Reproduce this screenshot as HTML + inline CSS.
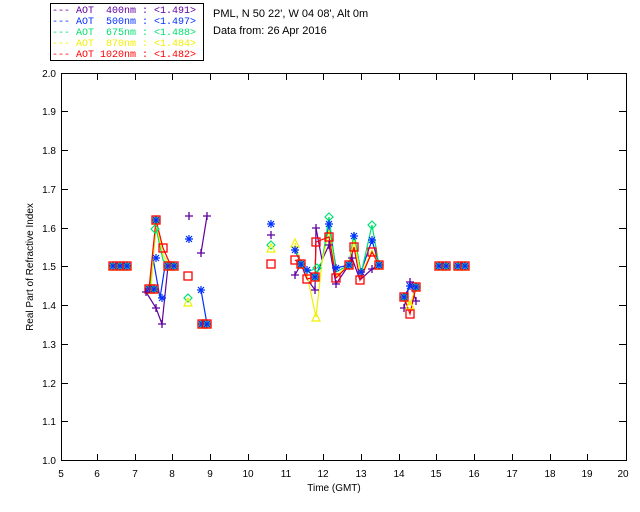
<!DOCTYPE html>
<html><head><meta charset="utf-8"><style>
html,body{margin:0;padding:0;background:#fff;width:640px;height:512px;overflow:hidden}
svg{display:block}
text{font-family:"Liberation Sans",sans-serif;font-size:10px}
.lg{font-family:"Liberation Mono",monospace;font-size:10px}
.hd{font-size:11px}
</style></head><body>
<svg width="640" height="512" viewBox="0 0 640 512" xmlns="http://www.w3.org/2000/svg">
<defs>
<g id="sq"><rect x="-4" y="-4" width="8" height="8" fill="none" stroke="#f00" stroke-width="1.3"/></g>
<g id="pl"><path d="M-4 0H4M0 -4V4" stroke="#6000a0" stroke-width="1.3"/></g>
<g id="as"><path d="M-4 0H4M0 -4V4M-3 -3L3 3M-3 3L3 -3" stroke="#0030ff" stroke-width="1.2"/></g>
<g id="di"><path d="M0 -4L4 0L0 4L-4 0Z" fill="none" stroke="#00e070" stroke-width="1.2"/></g>
<g id="tr"><path d="M0 -4L4 4H-4Z" fill="none" stroke="#f0f000" stroke-width="1.2"/></g>
<g id="al"><use href="#tr"/><use href="#di"/><use href="#as"/><use href="#sq"/></g>
</defs>
<rect x="50.5" y="3.5" width="153" height="57" fill="none" stroke="#000"/>
<g class="lg">
<text class="lg" x="52" y="13" fill="#6000a0" xml:space="preserve">--- AOT  400nm : &lt;1.491&gt;</text>
<text class="lg" x="52" y="24" fill="#0030ff" xml:space="preserve">--- AOT  500nm : &lt;1.497&gt;</text>
<text class="lg" x="52" y="35" fill="#00e070" xml:space="preserve">--- AOT  675nm : &lt;1.488&gt;</text>
<text class="lg" x="52" y="46" fill="#f0f000" xml:space="preserve">--- AOT  870nm : &lt;1.484&gt;</text>
<text class="lg" x="52" y="57" fill="#f00" xml:space="preserve">--- AOT 1020nm : &lt;1.482&gt;</text>
</g>
<text class="hd" x="213" y="17" fill="#000">PML, N 50 22', W 04 08', Alt 0m</text>
<text class="hd" x="213" y="34" fill="#000">Data from: 26 Apr 2016</text>
<rect x="61.5" y="73.5" width="565" height="387" fill="none" stroke="#000"/>
<g stroke="#000">
<path d="M97.5 461V454M135.5 461V454M172.5 461V454M210.5 461V454M248.5 461V454M286.5 461V454M323.5 461V454M361.5 461V454M399.5 461V454M436.5 461V454M474.5 461V454M512.5 461V454M550.5 461V454M587.5 461V454"/>
<path d="M97.5 73V80M135.5 73V80M172.5 73V80M210.5 73V80M248.5 73V80M286.5 73V80M323.5 73V80M361.5 73V80M399.5 73V80M436.5 73V80M474.5 73V80M512.5 73V80M550.5 73V80M587.5 73V80"/>
<path d="M61 421.5H68M61 383.5H68M61 344.5H68M61 305.5H68M61 266.5H68M61 228.5H68M61 189.5H68M61 150.5H68M61 111.5H68"/>
<path d="M626 421.5H619M626 383.5H619M626 344.5H619M626 305.5H619M626 266.5H619M626 228.5H619M626 189.5H619M626 150.5H619M626 111.5H619"/>
</g>
<g fill="#000" text-anchor="end">
<text x="56" y="77">2.0</text><text x="56" y="115">1.9</text><text x="56" y="154">1.8</text><text x="56" y="193">1.7</text><text x="56" y="232">1.6</text><text x="56" y="270">1.5</text><text x="56" y="309">1.4</text><text x="56" y="348">1.3</text><text x="56" y="387">1.2</text><text x="56" y="425">1.1</text><text x="56" y="464">1.0</text>
</g>
<g fill="#000" text-anchor="middle">
<text x="61" y="477">5</text><text x="97" y="477">6</text><text x="135" y="477">7</text><text x="172" y="477">8</text><text x="210" y="477">9</text><text x="248" y="477">10</text><text x="286" y="477">11</text><text x="323" y="477">12</text><text x="361" y="477">13</text><text x="399" y="477">14</text><text x="436" y="477">15</text><text x="474" y="477">16</text><text x="512" y="477">17</text><text x="550" y="477">18</text><text x="587" y="477">19</text><text x="623" y="477">20</text>
<text x="334" y="491">Time (GMT)</text>
<text transform="translate(33 267) rotate(-90)">Real Part of Refractive Index</text>
</g>
<g fill="none" stroke-width="1.2">
<polyline stroke="#6000a0" points="146,292 156,308 162,324 168,266"/>
<polyline stroke="#6000a0" points="201,253 207,216"/>
<polyline stroke="#0030ff" points="153,258 160,298 165,266"/>
<polyline stroke="#0030ff" points="201,290 207,324"/>
<polyline stroke="#00e070" points="150,289 156,228 163,260 170,266"/>
<polyline stroke="#f0f000" points="151,289 156,222 163,255 170,266"/>
<polyline stroke="#f00" points="149,289 156,220 163,248 171,266"/>
<polyline stroke="#6000a0" points="295,275 301,264 307,279 315,290 316,228 322,260 329,245 336,284 349,265 352,258 360,280 372,269 379,265"/>
<polyline stroke="#0030ff" points="295,250 301,264 307,270 315,277 322,262 329,224 336,268 349,265 354,236 361,272 372,240 379,265"/>
<polyline stroke="#00e070" points="295,248 301,264 307,272 317,268 322,262 329,217 336,272 349,265 354,232 361,274 372,225 379,265"/>
<polyline stroke="#f0f000" points="295,243 301,264 307,275 316,317 322,262 329,230 336,276 349,265 354,240 361,276 372,250 379,265"/>
<polyline stroke="#f00" points="295,260 301,264 307,279 315,277 316,242 329,237 336,278 349,265 354,247 360,280 372,252 379,265"/>
<polyline stroke="#6000a0" points="404,308 410,282 416,301"/>
<polyline stroke="#0030ff" points="404,297 410,286 416,287"/>
<polyline stroke="#f0f000" points="404,297 410,305 416,287"/>
<polyline stroke="#f00" points="404,297 410,314 416,287"/>
</g>
<use href="#al" x="113" y="266"/><use href="#al" x="120" y="266"/><use href="#al" x="127" y="266"/>
<use href="#al" x="149" y="289"/><use href="#al" x="154" y="289"/>
<use href="#al" x="156" y="220"/><use href="#di" x="155" y="229"/>
<use href="#sq" x="163" y="248"/><use href="#as" x="156" y="258"/>
<use href="#al" x="168" y="266"/><use href="#al" x="174" y="266"/>
<use href="#pl" x="146" y="292"/><use href="#pl" x="156" y="308"/><use href="#pl" x="162" y="324"/>
<use href="#as" x="162" y="298"/>
<use href="#pl" x="189" y="216"/><use href="#as" x="189" y="239"/><use href="#sq" x="188" y="276"/>
<use href="#di" x="188" y="298"/><use href="#tr" x="188" y="302"/>
<use href="#pl" x="207" y="216"/><use href="#pl" x="201" y="253"/><use href="#as" x="201" y="290"/>
<use href="#al" x="202" y="324"/><use href="#al" x="207" y="324"/>
<use href="#as" x="271" y="224"/><use href="#pl" x="271" y="235"/><use href="#di" x="271" y="245"/><use href="#tr" x="271" y="248"/><use href="#sq" x="271" y="264"/>
<use href="#tr" x="295" y="243"/><use href="#as" x="295" y="250"/><use href="#sq" x="295" y="260"/><use href="#pl" x="295" y="275"/>
<use href="#al" x="301" y="264"/><use href="#as" x="307" y="270"/><use href="#sq" x="307" y="279"/>
<use href="#di" x="317" y="268"/><use href="#al" x="315" y="277"/><use href="#pl" x="315" y="290"/>
<use href="#pl" x="316" y="228"/><use href="#sq" x="316" y="242"/><use href="#tr" x="316" y="317"/>
<use href="#di" x="329" y="217"/><use href="#as" x="329" y="224"/><use href="#sq" x="329" y="237"/><use href="#pl" x="329" y="245"/>
<use href="#as" x="336" y="268"/><use href="#sq" x="336" y="278"/><use href="#pl" x="336" y="284"/>
<use href="#al" x="349" y="265"/><use href="#as" x="354" y="236"/><use href="#sq" x="354" y="247"/><use href="#pl" x="352" y="258"/>
<use href="#as" x="361" y="272"/><use href="#sq" x="360" y="280"/>
<use href="#di" x="372" y="225"/><use href="#as" x="372" y="240"/><use href="#sq" x="372" y="252"/><use href="#pl" x="372" y="269"/><use href="#al" x="379" y="265"/>
<use href="#pl" x="410" y="282"/><use href="#pl" x="404" y="308"/><use href="#pl" x="416" y="301"/>
<use href="#al" x="404" y="297"/><use href="#al" x="416" y="287"/><use href="#as" x="410" y="286"/><use href="#tr" x="410" y="305"/><use href="#sq" x="410" y="314"/>
<use href="#al" x="439" y="266"/><use href="#al" x="446" y="266"/><use href="#al" x="458" y="266"/><use href="#al" x="465" y="266"/>
</svg>
</body></html>
